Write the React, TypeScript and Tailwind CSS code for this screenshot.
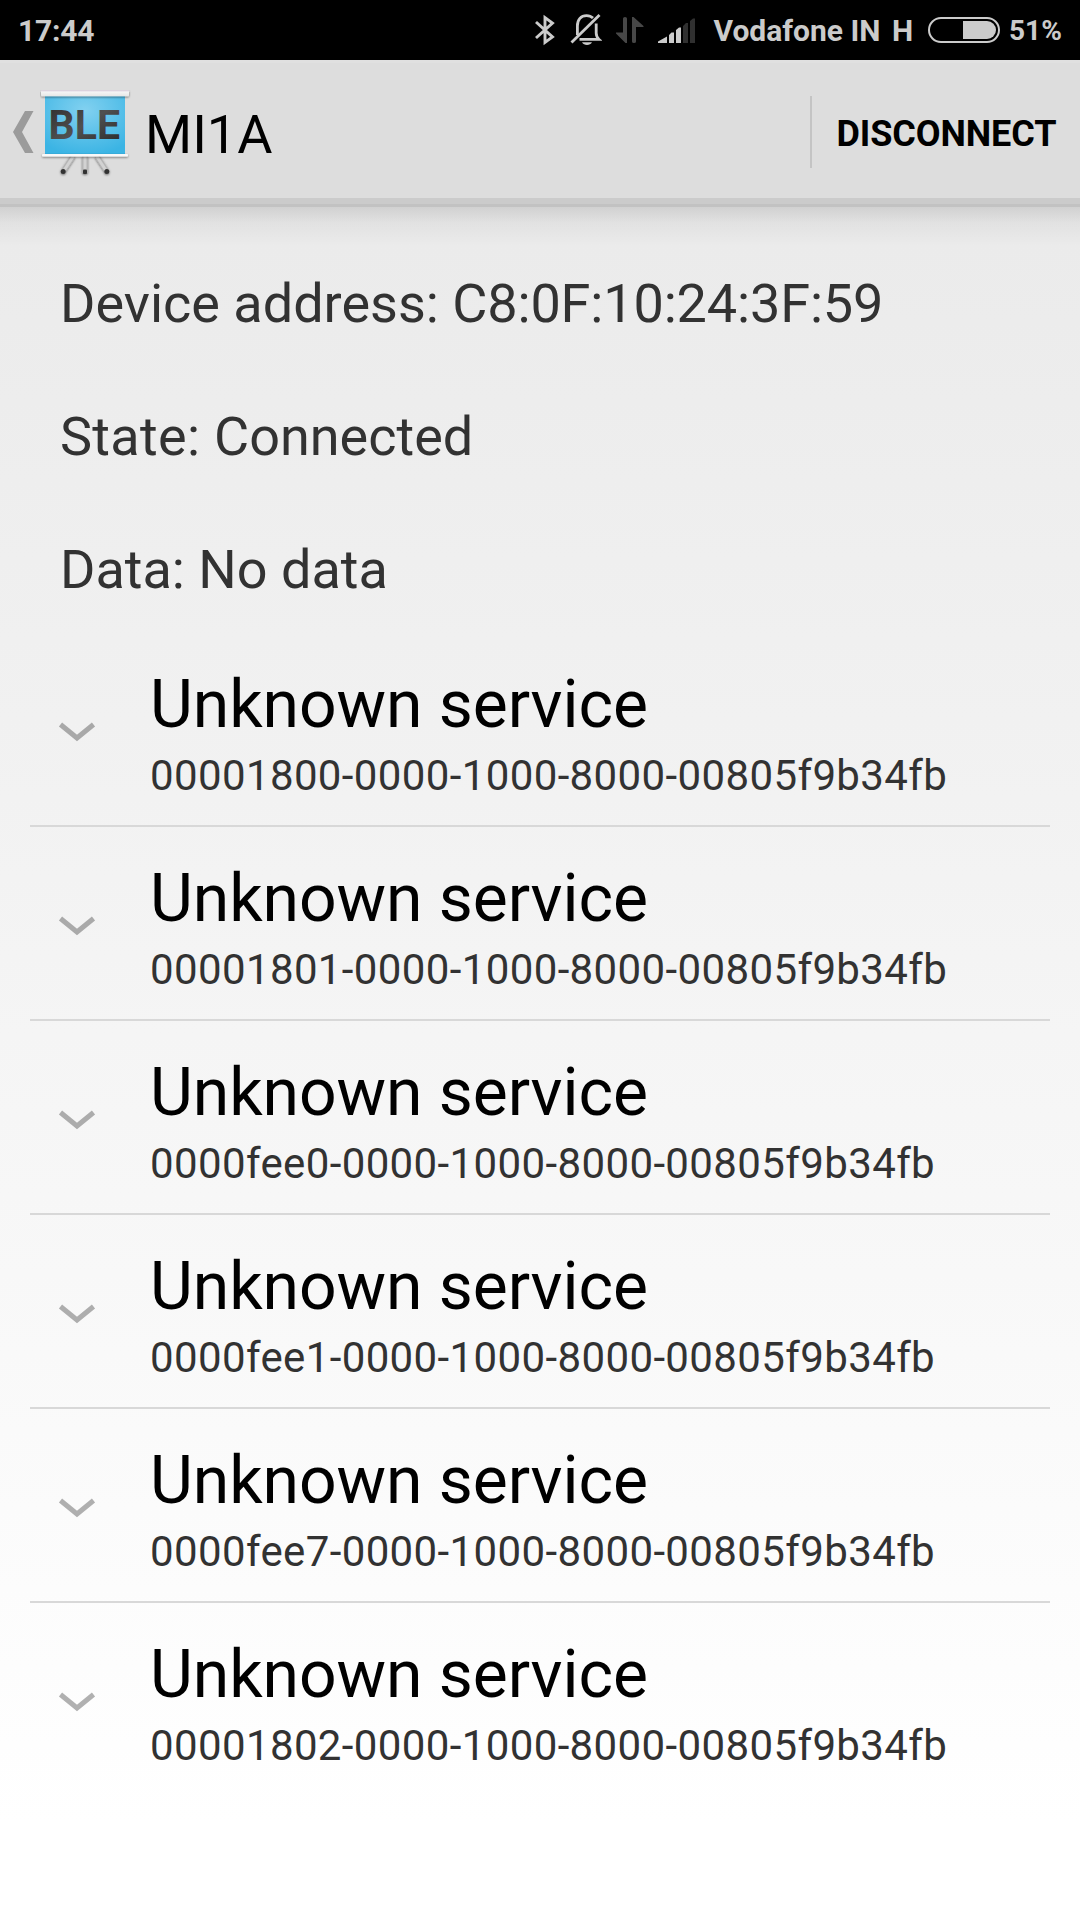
const services = [
  "00001800-0000-1000-8000-00805f9b34fb",
  "00001801-0000-1000-8000-00805f9b34fb",
  "0000fee0-0000-1000-8000-00805f9b34fb",
  "0000fee1-0000-1000-8000-00805f9b34fb",
  "0000fee7-0000-1000-8000-00805f9b34fb",
  "00001802-0000-1000-8000-00805f9b34fb",
];

function BluetoothIcon() {
  return (
    <svg className="h-[32px] w-[22px] shrink-0" viewBox="0 0 22 32" fill="none" stroke="#cbcbcb" strokeWidth="2.9">
      <path d="M2 8 18.500 23 11 28.500V3.500L18.500 9 2 24" />
    </svg>
  );
}

function MutedBellIcon() {
  return (
    <svg className="ml-[14px] h-[32px] w-[32px] shrink-0" viewBox="0 0 32 32" fill="none" stroke="#cbcbcb">
      <path strokeWidth="2.8" d="M7.4 21V12C7.4 5.500 11 1.600 16.500 1.600 19 1.600 21.300 2.400 23 4.100" />
      <path strokeWidth="2.8" d="M9.500 25.400H29C27 23.500 26.200 21.500 26.200 19V9.500" />
      <path strokeWidth="2.8" d="M1.500 28.400 29.500 1" />
      <path fill="#cbcbcb" stroke="none" d="M12 28.300H22C21 30.200 19.200 31 17 31S13 30.200 12 28.300Z" />
    </svg>
  );
}

function DataArrowsIcon() {
  return (
    <svg className="ml-[13px] h-[28px] w-[29px] shrink-0" viewBox="0 0 29 28" fill="#474747">
      <path d="M8 2.500Q8 1 10 1T12 2.500V27H10.500L1 17.500V16.500H8Z" />
      <path d="M17 1H18.500L28.500 10V11H21V25.500Q21 27 19 27T17 25.500Z" />
    </svg>
  );
}

function SignalIcon() {
  return (
    <svg className="ml-[13px] h-[28px] w-[40px] shrink-0" viewBox="0 0 40 28" fill="#cbcbcb">
      <path d="M1 27V25.500L10 20.500V27ZM12 27V19L14.500 16.500H17V27ZM19 27V14L22 11.500H24V27Z" />
      <path fill="#303030" d="M26 27V10L29 7H31V27ZM33 27V5L36 2.500H38V27Z" />
    </svg>
  );
}

function BatteryIcon() {
  return (
    <svg className="ml-[15px] h-[26px] w-[72px] shrink-0" viewBox="0 0 72 26" fill="none">
      <rect x="1" y="1" width="70" height="24" rx="12" stroke="#cbcbcb" strokeWidth="2" />
      <path fill="#cbcbcb" d="M35 4H59A9 9 0 0 1 59 22H35Z" />
    </svg>
  );
}

function StatusBar() {
  return (
    <div className="flex h-[60px] items-center bg-black text-[30px] leading-[36px] font-bold whitespace-nowrap text-[#cbcbcb]">
      <span className="mt-[2px] ml-[18px] w-[516px] shrink-0 tracking-[-0.2px]">17:44</span>
      <BluetoothIcon />
      <MutedBellIcon />
      <DataArrowsIcon />
      <SignalIcon />
      <span className="mt-[2px] ml-[16.5px] w-[167px] shrink-0">Vodafone IN</span>
      <span className="mt-[2px] ml-[11.5px] w-[21px] shrink-0">H</span>
      <BatteryIcon />
      <span className="mt-[1px] ml-[9px] shrink-0 text-[28px]">51%</span>
    </div>
  );
}

function BleLogo() {
  return (
    <svg className="h-[96px] w-[96px] shrink-0" viewBox="0 0 96 96">
      <defs>
        <radialGradient id="screen" cx="0.5" cy="0.25" r="0.75">
          <stop offset="0" stopColor="#82d1f0" />
          <stop offset="1" stopColor="#3bb4e4" />
        </radialGradient>
        <linearGradient id="rail" x1="0" y1="0" x2="0" y2="1">
          <stop offset="0" stopColor="#dccfe0" />
          <stop offset="0.3" stopColor="#f4f4f4" />
          <stop offset="1" stopColor="#e6e6e6" />
        </linearGradient>
        <linearGradient id="letters" x1="0" y1="0" x2="1" y2="1">
          <stop offset="0" stopColor="#2c2c2c" />
          <stop offset="0.5" stopColor="#505050" />
          <stop offset="1" stopColor="#262626" />
        </linearGradient>
        <filter id="soft" x="-10%" y="-50%" width="120%" height="250%">
          <feDropShadow dx="0" dy="1" stdDeviation="0.8" floodColor="#000" floodOpacity="0.5" />
        </filter>
      </defs>
      <g filter="url(#soft)">
        <path d="M33 66 22.500 82" stroke="#b5b5b5" strokeWidth="5" />
        <path d="M33.500 66 23 82" stroke="#d2d2d2" strokeWidth="3" />
        <path d="M45 66V83" stroke="#b5b5b5" strokeWidth="5.500" />
        <path d="M45 66V83" stroke="#d2d2d2" strokeWidth="3" />
        <path d="M57 66 67.500 82" stroke="#b5b5b5" strokeWidth="5" />
        <path d="M56.500 66 67 82" stroke="#d2d2d2" strokeWidth="3" />
        <circle cx="23.200" cy="81.500" r="2.500" fill="#333" />
        <rect x="43" y="79.500" width="4" height="4.500" rx="1" fill="#333" />
        <circle cx="66.800" cy="81.500" r="2.500" fill="#333" />
      </g>
      <rect x="5" y="5" width="80" height="61" fill="url(#screen)" />
      <rect x="2" y="64" width="86" height="2.600" rx="1" fill="#f8f8f8" filter="url(#soft)" />
      <rect x="1" y="0.300" width="88" height="6" rx="1" fill="url(#rail)" filter="url(#soft)" />
      <text x="8.500" y="49" fontFamily="Roboto, sans-serif" fontWeight="700" fontSize="41" textLength="71.500" fill="url(#letters)">
        BLE
      </text>
    </svg>
  );
}

function ActionBar() {
  return (
    <div>
      <div className="flex h-[138px] items-center border-t-[3px] border-[#e0e0e0] bg-[#ddd] pt-[3px]">
        <svg className="ml-[12px] h-[42px] w-[22px] shrink-0" viewBox="0 0 22 42" fill="#9b9b9b">
          <path d="M13 0H21.500L10 21 21.500 42H13L1 21Z" />
        </svg>
        <div className="ml-[6px] mt-[12px] shrink-0">
          <BleLogo />
        </div>
        <h1 className="ml-[9px] mt-[5px] text-[54px] leading-[63px] text-black">MI1A</h1>
        <div className="ml-auto h-[72px] w-[2px] bg-[#c4c4c4]" />
        <button className="mt-[4px] ml-[24.5px] mr-[23.5px] w-[220px] text-left text-[36px] leading-[42px] font-bold tracking-[-0.1px] whitespace-nowrap text-black">
          DISCONNECT
        </button>
      </div>
      <div className="h-[6px] bg-[#cbcbcb]" />
      <div className="h-[3px] bg-[#c2c2c2]" />
      <div className="h-[39px] bg-linear-to-b from-black/11 via-black/4 via-40% to-transparent" />
    </div>
  );
}

function ServiceRow({ uuid }: { uuid: string }) {
  return (
    <li className="flex h-[194px] border-b-2 border-[#d8d8d8] last:border-transparent">
      <svg className="ml-[28px] mt-[88px] h-[22px] w-[38px] shrink-0" viewBox="0 0 38 22" fill="none" stroke="#000" strokeOpacity="0.3" strokeWidth="5">
        <path d="M2.500 3.500 19 17 35.500 3.500" />
      </svg>
      <div className="ml-[54px] mt-[33px] whitespace-nowrap">
        <div className="text-[66px] leading-[77px] tracking-[-0.06px] text-black">Unknown service</div>
        <div className="mt-[8px] text-[42px] leading-[49px] tracking-[0.375px] text-[#323232]">{uuid}</div>
      </div>
    </li>
  );
}

export default function App() {
  return (
    <div className="flex h-[1920px] w-[1080px] flex-col overflow-hidden bg-linear-to-b from-[#e8e8e8] to-white to-95% font-[Roboto,sans-serif]">
      <StatusBar />
      <ActionBar />
      <div className="mt-[26px] ml-[60px] flex flex-col gap-[70px] text-[54px] leading-[63px] text-[#323232]">
        <p>
          Device address: <span className="tracking-[-0.14px]">C8:0F:10:24:3F:59</span>
        </p>
        <p>
          <span className="tracking-[0.3px]">State: </span>Connected
        </p>
        <p>Data: No data</p>
      </div>
      <ul className="mx-[30px] mt-[32px]">
        {services.map((uuid) => (
          <ServiceRow key={uuid} uuid={uuid} />
        ))}
      </ul>
    </div>
  );
}
